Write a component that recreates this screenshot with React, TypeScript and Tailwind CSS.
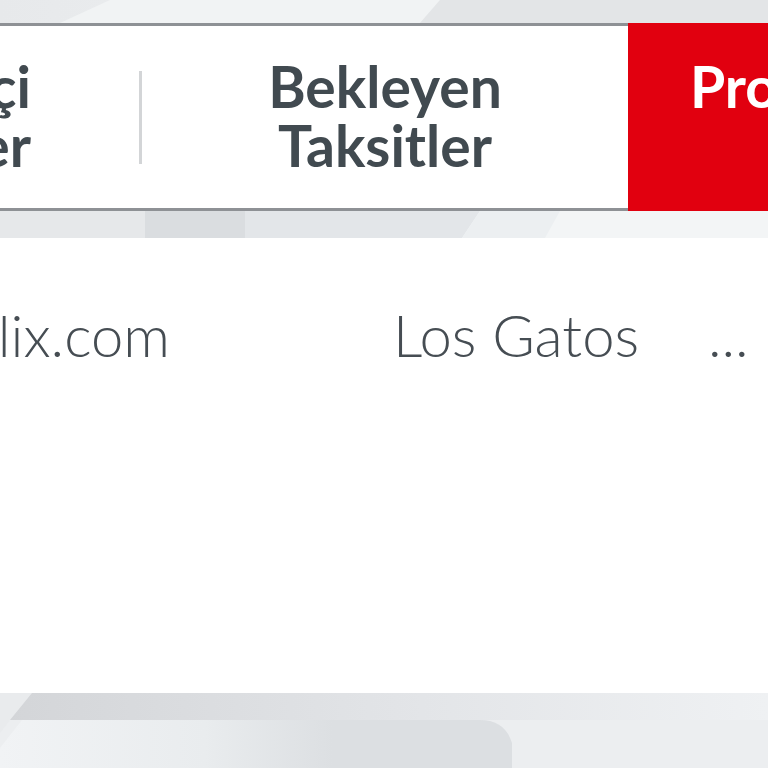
import React from 'react';

const font = { fontFamily: 'Lato, "Open Sans", sans-serif' };

const TopStrip = () => (
  <svg className="block h-[23px] w-full" viewBox="0 0 768 23" preserveAspectRatio="none">
    <defs>
      <linearGradient id="tg" x1="0" x2="1" y1="0" y2="0">
        <stop offset="0" stopColor="#e7e9eb" />
        <stop offset="0.5" stopColor="#eef0f2" />
        <stop offset="1" stopColor="#e4e6e8" />
      </linearGradient>
    </defs>
    <rect width="768" height="23" fill="url(#tg)" />
    <polygon points="60,23 110,0 440,0 420,23" fill="#f1f3f4" />
    <polygon points="440,0 768,0 768,23 420,23" fill="#e3e5e7" />
  </svg>
);

const MidStrip = () => (
  <svg className="block h-[27px] w-full" viewBox="0 0 768 27" preserveAspectRatio="none">
    <rect width="768" height="27" fill="#f3f5f6" />
    <rect x="0" y="0" width="145" height="27" fill="#e6e8ea" />
    <rect x="145" y="0" width="100" height="27" fill="#dadde0" />
    <polygon points="245,0 480,0 462,27 245,27" fill="#e3e6e9" />
    <polygon points="480,0 560,0 545,27 462,27" fill="#eceff1" />
  </svg>
);

const BottomStrip = () => (
  <svg className="block h-[75px] w-full" viewBox="0 0 768 75" preserveAspectRatio="none">
    <defs>
      <linearGradient id="bg1" x1="0" x2="1" y1="0" y2="0">
        <stop offset="0" stopColor="#d3d5d8" />
        <stop offset="0.55" stopColor="#e3e5e8" />
        <stop offset="1" stopColor="#eff1f3" />
      </linearGradient>
      <linearGradient id="bg2" x1="0" x2="1" y1="0" y2="0">
        <stop offset="0" stopColor="#f1f3f5" />
        <stop offset="0.4" stopColor="#e9ecee" />
        <stop offset="0.65" stopColor="#dcdfe2" />
      </linearGradient>
    </defs>
    <rect width="768" height="75" fill="#eceef0" />
    <polygon points="0,0 768,0 768,27 0,27" fill="url(#bg1)" />
    <polygon points="0,0 32,0 10,27 0,40" fill="#e9ebed" />
    <path d="M22,27 L480,27 Q505,27 512,50 L512,75 L0,75 L0,55 Z" fill="url(#bg2)" />
  </svg>
);

const App = () => {
  return (
    <div className="h-[768px] w-[768px] overflow-hidden bg-[#eceef0]" style={font}>
      <TopStrip />

      <div className="flex h-[188px] w-[1800px] -ml-[348px] text-[57px] font-bold leading-[59px]">
        <div className="flex w-[487px] shrink-0 flex-col items-end justify-center whitespace-nowrap border-y-[3px] border-[#8e9195] bg-white pb-[2px] pr-[108px] text-[#414a50]">
          <span>Dönem İçi</span>
          <span>İşlemler</span>
        </div>
        <div className="flex shrink-0 items-center border-y-[3px] border-[#8e9195] bg-white">
          <div className="h-[93px] w-[3px] bg-[#d3d5d7]" />
        </div>
        <div className="flex w-[486px] shrink-0 flex-col items-center justify-center whitespace-nowrap border-y-[3px] border-[#8e9195] bg-white pb-[2px] text-[#414a50]">
          <span>Bekleyen</span>
          <span>Taksitler</span>
        </div>
        <div className="flex shrink-0 flex-col items-center justify-center whitespace-nowrap bg-[#e1000f] px-[62px] pb-[2px] text-white">
          <span>Provizyondaki</span>
          <span>İşlemler</span>
        </div>
      </div>

      <MidStrip />

      <div className="h-[455px] bg-white">
        <div className="flex pt-[62px] text-[58px] font-light leading-[70px] text-[#464d53]">
          <div className="flex w-[170px] shrink-0 justify-end whitespace-nowrap">
            <span>netflix.com</span>
          </div>
          <div className="ml-[223px] w-[315px] shrink-0 whitespace-nowrap">Los Gatos</div>
          <div className="whitespace-nowrap">...</div>
        </div>
      </div>

      <BottomStrip />
    </div>
  );
};

export default App;
